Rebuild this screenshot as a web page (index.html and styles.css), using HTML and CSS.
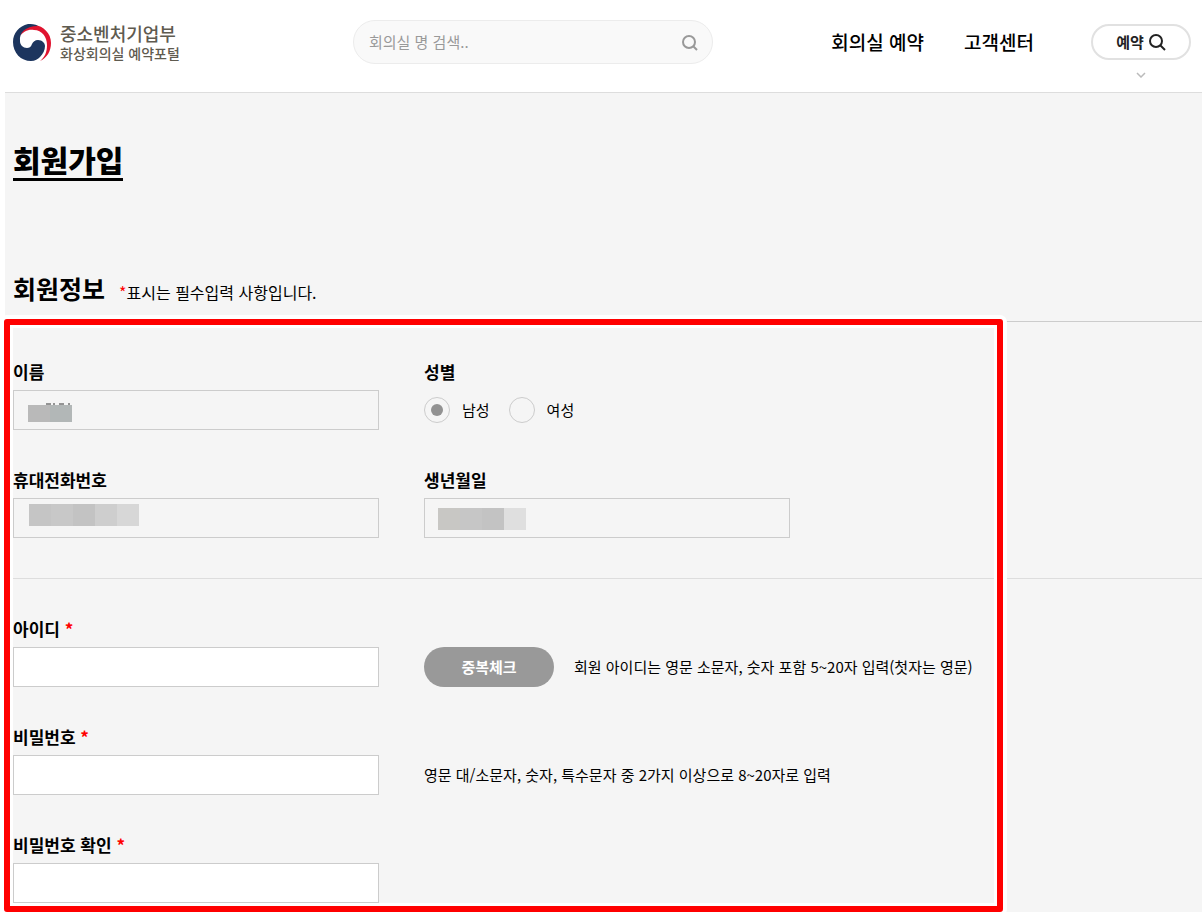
FILE: index.html
```html
<!DOCTYPE html>
<html lang="ko">
<head>
<meta charset="UTF-8">
<meta name="viewport" content="width=device-width, initial-scale=1">
<title>회원가입 - 화상회의실 예약포털</title>
<link rel="stylesheet" href="styles.css">
</head>
<body>
<header class="header">
  <a class="logo" href="#">
    <svg class="logo-mark" viewBox="0 0 39 38" aria-hidden="true">
      <path fill="#e0142f" d="M7 12C9 5 16 1 22 1C30 2 38 9 38 19C38 27 34 34 27 37C32 33 34 28 34 21C34 13 29 6 21 6C15 5 10 8 7 12Z"/>
      <path fill="#1c355e" d="M25 2C22 0 18 0 15 0C6 2 0 9 0 18C0 29 8 37 18 37C22 37 25 35 27 33C30 30 32 26 32 22C32 19 29 16 25 16C22 16 20 18 19 20C18 23 16 24 14 24C10 24 7 21 7 17C6 9 12 2 25 2Z"/>
    </svg>
    <span class="logo-text">
      <span class="logo-org">중소벤처기업부</span>
      <span class="logo-name">화상회의실 예약포털</span>
    </span>
  </a>
  <form class="search">
    <input class="search-input" type="text" placeholder="회의실 명 검색.." aria-label="회의실 명 검색">
    <button class="search-btn" type="button" aria-label="검색">
      <svg viewBox="0 0 18 18"><circle cx="8" cy="9" r="6"/><path d="M12 13l4 4"/></svg>
    </button>
  </form>
  <nav class="nav">
    <a href="#">회의실 예약</a>
    <a href="#">고객센터</a>
  </nav>
  <div class="reserve">
    <button class="reserve-btn" type="button">예약
      <svg viewBox="0 0 18 18"><circle cx="8" cy="8" r="6"/><path d="M12 12l5 5"/></svg>
    </button>
    <svg class="reserve-arrow" viewBox="0 0 10 6"><path d="M1 1l4 4 4-4"/></svg>
  </div>
</header>

<main class="content">
  <h1 class="page-title">회원가입</h1>
  <div class="section-head">
    <h2>회원정보</h2>
    <p><span class="required">*</span>표시는 필수입력 사항입니다.</p>
  </div>

  <form class="join-form">
    <div class="fields identity">
      <div class="field">
        <label for="name">이름</label>
        <div class="input-wrap">
          <input id="name" class="text-input" type="text" readonly>
          <svg class="mask mask-name" viewBox="0 0 44 20">
            <path fill="none" stroke="#333" d="M18 2h5M26 1v2M31 2h5M41 1v2"/>
            <path fill="#b9b9b9" d="M0 3h22v17H0z"/>
            <path fill="#b2b7b7" d="M22 3h22v17H22z"/>
          </svg>
        </div>
      </div>
      <fieldset class="field">
        <legend>성별</legend>
        <div class="radios">
          <label><input type="radio" name="gender" checked>남성</label>
          <label><input type="radio" name="gender">여성</label>
        </div>
      </fieldset>
      <div class="field">
        <label for="phone">휴대전화번호</label>
        <div class="input-wrap">
          <input id="phone" class="text-input" type="text" readonly>
          <svg class="mask mask-phone" viewBox="0 0 110 22">
            <path fill="#c5c5c5" d="M0 0h22v22H0z"/>
            <path fill="#c8c8c8" d="M22 0h22v22H22z"/>
            <path fill="#c3c3c3" d="M44 0h22v22H44z"/>
            <path fill="#cecece" d="M66 0h22v22H66z"/>
            <path fill="#d7d7d7" d="M88 0h22v22H88z"/>
          </svg>
        </div>
      </div>
      <div class="field">
        <label for="birth">생년월일</label>
        <div class="input-wrap">
          <input id="birth" class="text-input" type="text" readonly>
          <svg class="mask mask-birth" viewBox="0 0 88 22">
            <path fill="#c8c7c4" d="M0 0h22v22H0z"/>
            <path fill="#c6c6c6" d="M22 0h22v22H22z"/>
            <path fill="#c3c3c3" d="M44 0h22v22H44z"/>
            <path fill="#dfdfdf" d="M66 0h22v22H66z"/>
          </svg>
        </div>
      </div>
    </div>

    <div class="fields account">
      <div class="field">
        <label for="user-id">아이디 <span class="required">*</span></label>
        <input id="user-id" class="text-input" type="text">
      </div>
      <div class="help">
        <button class="check-btn" type="button">중복체크</button>
        <span>회원 아이디는 영문 소문자, 숫자 포함 5~20자 입력(첫자는 영문)</span>
      </div>
      <div class="field">
        <label for="password">비밀번호 <span class="required">*</span></label>
        <input id="password" class="text-input" type="password">
      </div>
      <div class="help">
        <span>영문 대/소문자, 숫자, 특수문자 중 2가지 이상으로 8~20자로 입력</span>
      </div>
      <div class="field">
        <label for="password2">비밀번호 확인 <span class="required">*</span></label>
        <input id="password2" class="text-input" type="password">
      </div>
    </div>
    <div class="highlight"></div>
  </form>
</main>
</body>
</html>
```

FILE: styles.css
```css
* {
  box-sizing: border-box;
}
body {
  margin: 0;
  padding-left: 5px;
  background-color: #fff;
  color: #000;
  font-family: "Noto Sans CJK KR", "Noto Sans", sans-serif;
  font-size: 15px;
  line-height: 24px;
}
h1, h2, p, fieldset, legend {
  margin: 0;
  padding: 0;
  border: 0;
}
input, button {
  font: inherit;
}
a {
  color: inherit;
  text-decoration: none;
}
.required {
  color: #f00;
}

/* header */
.header {
  display: flex;
  align-items: flex-start;
  height: 93px;
  padding: 20px 11px 0 8px;
  border-bottom: 1px solid #ddd;
}
.logo {
  display: flex;
  align-items: center;
  gap: 8px;
  width: 340px;
  height: 44px;
  padding-top: 2px;
  color: #5f5b50;
}
.logo-mark {
  width: 39px;
  height: 38px;
}
.logo-text {
  display: flex;
  flex-direction: column;
  font-weight: 500;
}
.logo-org {
  font-size: 18px;
  line-height: 20px;
}
.logo-name {
  font-size: 14px;
  line-height: 20px;
}
.search {
  display: flex;
  align-items: center;
  width: 360px;
  height: 44px;
  padding: 0 13px 0 15px;
  border: 1px solid #ececec;
  border-radius: 22px;
  background-color: #f9f9f9;
}
.search-input {
  flex: 1;
  min-width: 0;
  padding: 0;
  border: 0;
  outline: 0;
  background: none;
}
.search-input::placeholder {
  color: #999;
}
.search-btn {
  display: flex;
  padding: 0;
  border: 0;
  background: none;
}
.search-btn svg, .reserve-btn svg {
  width: 18px;
  height: 18px;
  fill: none;
  stroke: #999;
  stroke-width: 2;
}
.nav {
  display: flex;
  gap: 40px;
  margin-left: auto;
  font-size: 19px;
  font-weight: 500;
  line-height: 44px;
}
.reserve {
  display: flex;
  flex-direction: column;
  align-items: center;
  gap: 12px;
  margin: 4px 0 0 57px;
}
.reserve-btn {
  display: flex;
  align-items: center;
  justify-content: center;
  gap: 4px;
  width: 100px;
  height: 36px;
  padding: 0;
  border: 2px solid #e1e1e1;
  border-radius: 18px;
  background-color: #fff;
  color: #222;
  font-weight: 700;
}
.reserve-btn svg {
  stroke: #222;
}
.reserve-arrow {
  width: 10px;
  height: 6px;
  fill: none;
  stroke: #bbb;
  stroke-width: 1.5;
}

/* content */
.content {
  padding: 47px 0 9px 8px;
  background-color: #f5f5f5;
}
.page-title {
  display: inline-block;
  border-bottom: 3px solid #000;
  font-size: 30px;
  font-weight: 900;
  line-height: 38px;
}
.section-head {
  display: flex;
  align-items: baseline;
  gap: 14px;
  margin-top: 88px;
  padding-bottom: 14px;
  border-bottom: 1px solid #ccc;
}
.section-head h2 {
  font-size: 25px;
  font-weight: 700;
  line-height: 38px;
}
.section-head p {
  font-size: 16px;
}

/* form */
.join-form {
  position: relative;
}
.fields {
  display: grid;
  grid-template-columns: 366px 1fr;
  column-gap: 45px;
  row-gap: 36px;
}
.identity {
  padding: 36px 0 40px;
  border-bottom: 1px solid #ddd;
}
.account {
  padding-top: 36px;
}
.field > label, .field legend {
  display: block;
  height: 32px;
  font-size: 17px;
  font-weight: 700;
  line-height: 28px;
}
.input-wrap {
  position: relative;
}
.text-input {
  display: block;
  width: 366px;
  height: 40px;
  padding: 0 14px;
  border: 1px solid #ccc;
  background-color: #fff;
}
.text-input:read-only {
  background-color: #f5f5f5;
}
.mask {
  position: absolute;
  height: 22px;
}
.mask-name {
  top: 12px;
  left: 15px;
  width: 44px;
  height: 20px;
}
.mask-phone {
  top: 6px;
  left: 16px;
  width: 110px;
}
.mask-birth {
  top: 10px;
  left: 14px;
  width: 88px;
}
.radios {
  display: flex;
  align-items: center;
  gap: 19px;
  height: 40px;
}
.radios label {
  display: flex;
  align-items: center;
  gap: 12px;
}
.radios input {
  display: grid;
  place-content: center;
  width: 26px;
  height: 26px;
  margin: 0;
  border: 1px solid #ccc;
  border-radius: 50%;
  appearance: none;
}
.radios input:checked::before {
  content: "";
  width: 12px;
  height: 12px;
  border-radius: 50%;
  background-color: #929292;
}
.help {
  display: flex;
  align-items: center;
  gap: 20px;
  height: 40px;
  margin-top: 32px;
}
.check-btn {
  width: 130px;
  height: 40px;
  padding: 0;
  border: 0;
  border-radius: 20px;
  background-color: #999;
  color: #fff;
  font-weight: 700;
}

/* red guide frame over the form */
.highlight {
  position: absolute;
  top: -3px;
  right: 199px;
  bottom: -9px;
  left: -9px;
  border: 6px solid #f00;
  border-radius: 3px;
  box-shadow: 0 0 0 4px #fff, inset 0 0 0 3px #fff;
  pointer-events: none;
}
```
